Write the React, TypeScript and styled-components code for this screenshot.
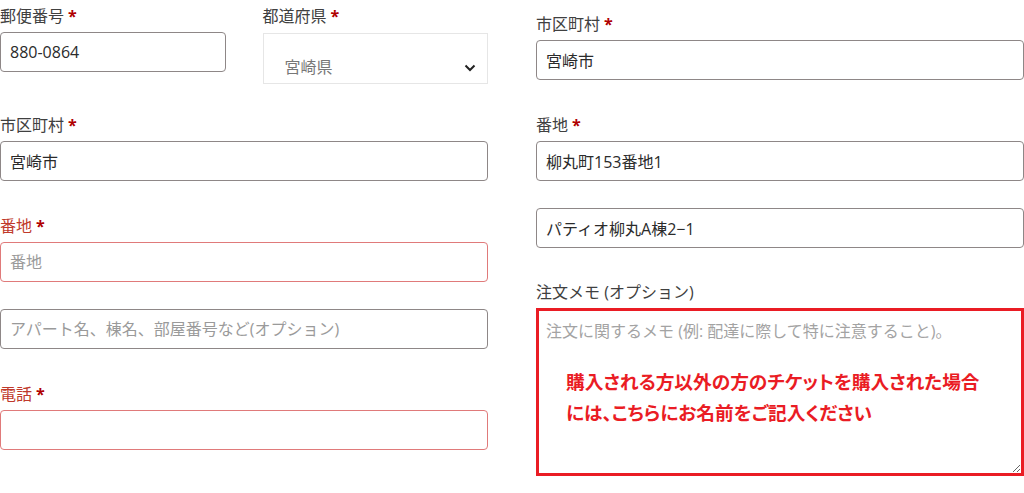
import styled, { createGlobalStyle } from "styled-components";

const GlobalStyle = createGlobalStyle`
  html, body {
    margin: 0;
    padding: 0;
    background: #ffffff;
  }
  body {
    font-family: "Open Sans", "Noto Sans CJK JP", sans-serif;
    color: #333333;
  }
  * {
    box-sizing: border-box;
  }
`;

const FormGrid = styled.form`
  display: grid;
  grid-template-columns: 488px 488px;
  column-gap: 48px;
  width: 1024px;
  align-items: start;
`;

const Column = styled.div`
  display: flex;
  flex-direction: column;
`;

const Row = styled.div<{ $top: number }>`
  display: grid;
  grid-template-columns: 1fr 1fr;
  column-gap: 37px;
  margin-top: ${(p) => p.$top}px;
  align-items: start;
`;

const Field = styled.div<{ $top: number }>`
  display: flex;
  flex-direction: column;
  margin-top: ${(p) => p.$top}px;
`;

const Label = styled.label<{ $error?: boolean }>`
  font-size: 16px;
  line-height: 24px;
  margin-bottom: 4px;
  color: ${(p) => (p.$error ? "#c0392b" : "#404040")};
`;

const Required = styled.span`
  color: #b00000;
  font-weight: 700;
  margin-left: 4px;
`;

const TextInput = styled.input<{ $error?: boolean }>`
  height: 40px;
  width: 100%;
  padding: 0 9px;
  font-family: "Open Sans", "Noto Sans CJK JP", sans-serif;
  font-size: 16px;
  color: #2b2b2b;
  background: #ffffff;
  border: 1px solid ${(p) => (p.$error ? "#e07a7a" : "#8e8787")};
  border-radius: 4px;
  outline: none;
  &::placeholder {
    color: #9a9a9a;
  }
`;

const SelectBox = styled.div`
  position: relative;
  margin-top: 1px;
`;

const Select = styled.select`
  appearance: none;
  width: 100%;
  height: 51px;
  padding: 16px 40px 0 21px;
  font-family: "Open Sans", "Noto Sans CJK JP", sans-serif;
  font-size: 16px;
  color: #777777;
  background: #ffffff;
  border: 1px solid #e6e6e6;
  border-radius: 0;
  outline: none;
`;

const Chevron = styled.svg`
  position: absolute;
  right: 12px;
  top: 31px;
  pointer-events: none;
`;

const MemoBox = styled.div`
  position: relative;
  height: 168px;
  border: 3px solid #ea1c24;
`;

const Memo = styled.textarea`
  display: block;
  width: 100%;
  height: 100%;
  padding: 8px 7px;
  font-family: "Open Sans", "Noto Sans CJK JP", sans-serif;
  font-size: 16px;
  line-height: 24px;
  color: #2b2b2b;
  border: none;
  outline: none;
  resize: vertical;
  background: #ffffff;
  &::placeholder {
    color: #a3a3a3;
  }
`;

const Annotation = styled.div`
  position: absolute;
  left: 27px;
  top: 54px;
  font-family: "Noto Sans CJK JP", sans-serif;
  font-feature-settings: "palt";
  font-weight: 700;
  font-size: 18.7px;
  line-height: 31px;
  color: #ea1c24;
  pointer-events: none;
`;

const App = () => {
  return (
    <>
      <GlobalStyle />
      <FormGrid>
        <Column>
          <Row $top={4}>
            <Field $top={0}>
              <Label>
                郵便番号<Required>*</Required>
              </Label>
              <TextInput defaultValue="880-0864" />
            </Field>
            <Field $top={0}>
              <Label>
                都道府県<Required>*</Required>
              </Label>
              <SelectBox>
                <Select defaultValue="宮崎県">
                  <option>宮崎県</option>
                </Select>
                <Chevron width="12" height="8" viewBox="0 0 12 8">
                  <path d="M1.5 1.5 L6 6 L10.5 1.5" fill="none" stroke="#222" strokeWidth="2" />
                </Chevron>
              </SelectBox>
            </Field>
          </Row>
          <Field $top={29}>
            <Label>
              市区町村<Required>*</Required>
            </Label>
            <TextInput defaultValue="宮崎市" />
          </Field>
          <Field $top={33}>
            <Label $error>
              番地<Required>*</Required>
            </Label>
            <TextInput $error placeholder="番地" />
          </Field>
          <Field $top={27}>
            <TextInput placeholder="アパート名、棟名、部屋番号など(オプション)" />
          </Field>
          <Field $top={33}>
            <Label $error>
              電話<Required>*</Required>
            </Label>
            <TextInput $error />
          </Field>
        </Column>
        <Column>
          <Field $top={12}>
            <Label>
              市区町村<Required>*</Required>
            </Label>
            <TextInput defaultValue="宮崎市" />
          </Field>
          <Field $top={33}>
            <Label>
              番地<Required>*</Required>
            </Label>
            <TextInput defaultValue="柳丸町153番地1" />
          </Field>
          <Field $top={27}>
            <TextInput defaultValue="パティオ柳丸A棟2−1" />
          </Field>
          <Field $top={32}>
            <Label>注文メモ (オプション)</Label>
            <MemoBox>
              <Memo placeholder="注文に関するメモ (例: 配達に際して特に注意すること)。" />
              <Annotation>
                購入される方以外の方のチケットを購入された場合
                <br />
                には、こちらにお名前をご記入ください
              </Annotation>
            </MemoBox>
          </Field>
        </Column>
      </FormGrid>
    </>
  );
};

export default App;
